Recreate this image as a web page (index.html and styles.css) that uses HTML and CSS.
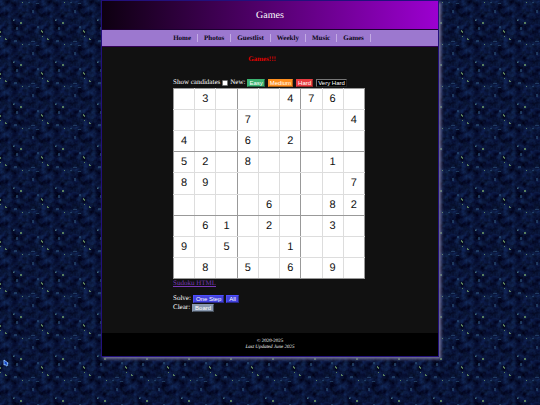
FILE: index.html
```
<!DOCTYPE html>
<html lang="en">
<head>
    <meta charset="UTF-8">
    <meta name="viewport" content="width=device-width, initial-scale=1.0">
    <title>Games</title>
    <link rel="stylesheet" href="styles.css">
</head>
<body>
    <div class="page">
        <header class="header">
            <h1>Games</h1>
        </header>
        <nav class="nav">
            <a href="#home">Home</a>
            <a href="#photos">Photos</a>
            <a href="#guestlist">Guestlist</a>
            <a href="#weekly">Weekly</a>
            <a href="#music">Music</a>
            <a href="#games">Games</a>
        </nav>
        <main class="main">
            <h2>Games!!!</h2>
            <div class="sudoku">
                <div class="controls">
                    <label for="candidates">Show candidates</label>
                    <input type="checkbox" id="candidates">
                    <span class="new">New:</span>
                    <button class="btn easy">Easy</button>
                    <button class="btn medium">Medium</button>
                    <button class="btn hard">Hard</button>
                    <button class="btn veryhard">Very Hard</button>
                </div>
                <table class="board" id="board">
                    <tbody>
                        <tr><td></td><td>3</td><td></td><td></td><td></td><td>4</td><td>7</td><td>6</td><td></td></tr>
                        <tr><td></td><td></td><td></td><td>7</td><td></td><td></td><td></td><td></td><td>4</td></tr>
                        <tr><td>4</td><td></td><td></td><td>6</td><td></td><td>2</td><td></td><td></td><td></td></tr>
                        <tr><td>5</td><td>2</td><td></td><td>8</td><td></td><td></td><td></td><td>1</td><td></td></tr>
                        <tr><td>8</td><td>9</td><td></td><td></td><td></td><td></td><td></td><td></td><td>7</td></tr>
                        <tr><td></td><td></td><td></td><td></td><td>6</td><td></td><td></td><td>8</td><td>2</td></tr>
                        <tr><td></td><td>6</td><td>1</td><td></td><td>2</td><td></td><td></td><td>3</td><td></td></tr>
                        <tr><td>9</td><td></td><td>5</td><td></td><td></td><td>1</td><td></td><td></td><td></td></tr>
                        <tr><td></td><td>8</td><td></td><td>5</td><td></td><td>6</td><td></td><td>9</td><td></td></tr>
                    </tbody>
                </table>
                <a class="source" href="#sudoku">Sudoku HTML</a>
                <div class="actions">
                    <span>Solve:</span>
                    <button class="btn solve">One Step</button>
                    <button class="btn solve">All</button>
                </div>
                <div class="actions">
                    <span>Clear:</span>
                    <button class="btn clear">Board</button>
                </div>
            </div>
        </main>
        <footer class="footer">
            <p>&copy; 2020-2025</p>
            <p><i>Last Updated June 2025</i></p>
        </footer>
    </div>

    <svg class="pointer" viewBox="0 0 6 8" aria-hidden="true">
        <path d="M1 1 L1 6 L2.3 5.4 L3.3 7 L4.6 6.4 L4 4.8 L5.2 4.2 Z" fill="#0b3cc4" stroke="#8fc4ff" stroke-width=".9"/>
    </svg>
</body>
</html>
```
FILE: styles.css
```
* {
    box-sizing: border-box;
}

body {
    margin: 0;
    min-height: 100vh;
    font-family: "Liberation Serif", "Times New Roman", serif;
    font-size: 7px;
    line-height: 9px;
    text-rendering: geometricPrecision;
    color: #fff;
    background-color: #050f30;
    /* speckled blue rock tile */
    background-image: url("data:image/svg+xml,%3Csvg xmlns='http://www.w3.org/2000/svg' width='42' height='42'%3E%3Cfilter id='r' x='0' y='0' width='100%25' height='100%25' color-interpolation-filters='sRGB'%3E%3CfeTurbulence type='fractalNoise' baseFrequency='.17' numOctaves='3' seed='11' stitchTiles='stitch'/%3E%3CfeColorMatrix values='.1 .05 0 0 -.04 .22 .12 0 0 -.09 .38 .12 0 0 -.03 0 0 0 0 1'/%3E%3C/filter%3E%3Crect width='42' height='42' filter='url(%23r)'/%3E%3Cg fill='%23729f68' opacity='.75'%3E%3Cpath d='M20 22h2v2h-2zM5 39h2v1h-2zM0 31h1v2h-1zM0 36h1v1h-1zM5 38h1v2h-1zM41 30h1v2h-1zM13 20h1v1h-1zM22 2h1v1h-1z'/%3E%3C/g%3E%3Cg fill='%23355f85' opacity='.5'%3E%3Cpath d='M32 10h2v3h-2zM13 19h2v2h-2zM28 2h2v1h-2zM36 3h3v1h-3zM16 27h2v3h-2zM37 26h2v2h-2zM14 42h3v-2h-3zM31 41h4v1h-4z'/%3E%3C/g%3E%3C/svg%3E");
}

h1, h2, p {
    margin: 0;
}

.page {
    margin: 0 101px;
    border: 1px solid #22107c;
    box-shadow: 2px 2px 3px #77759c;
}

.header {
    padding: 9px 0 7px;
    border-bottom: 1px solid #1c0030;
    background: linear-gradient(to right, #0d0010, #9c00d0);
    text-align: center;
}

.header h1 {
    font-size: 10px;
    font-weight: normal;
    line-height: 12px;
}

.nav {
    display: flex;
    justify-content: center;
    padding: 4px 2px 4px 0;
    border-bottom: 1px solid #320055;
    background: #9c78cf;
}

.nav a {
    padding: 0 6px;
    border-right: 1px solid #c3abe4;
    color: #0b0614;
    font-weight: bold;
    line-height: 8px;
    text-decoration: none;
}

.main {
    padding: 8px 2px 21px 0;
    background: #111;
}

.main h2 {
    margin-bottom: 13px;
    padding-right: 14px;
    color: #e00000;
    font-size: 7px;
    text-align: center;
}

.sudoku {
    width: 192px;
    margin: 0 auto;
}

.controls, .actions {
    display: flex;
    align-items: center;
    gap: 2px;
    white-space: nowrap;
}

.controls {
    height: 11px;
}

.controls input {
    width: 6px;
    height: 6px;
    margin: 0;
    appearance: none;
    border: 1px solid #767676;
    border-radius: 1px;
    background: #fff;
}

.btn {
    height: 8px;
    padding: 0 2px;
    border: 1px outset #777;
    font-family: "Liberation Sans", Arial, sans-serif;
    font-size: 6px;
    line-height: 6px;
    color: #fff;
}

.controls .btn {
    padding: 0 1px;
}

.controls .btn + .btn {
    margin-left: 1px;
}

.easy {
    background: #3cb371;
    border-color: #3cb371;
}

.medium {
    background: #ff9020;
    border-color: #ff9020;
}

.hard {
    background: #e83c40;
    border-color: #e83c40;
}

.veryhard {
    background: #000;
}

.solve {
    background: #4343dd;
    border-color: #4343dd;
}

.clear {
    background: #8797ae;
    border-color: #8797ae;
}

.board {
    width: 100%;
    height: 191px;
    table-layout: fixed;
    border-collapse: collapse;
    border: 1px solid #999;
    background: #fff;
    color: #111;
    font-family: "Liberation Sans", Arial, sans-serif;
    font-size: 11px;
    line-height: 20px;
}

.board td {
    height: 21px;
    padding: 0;
    border: 1px solid #ddd;
    text-align: center;
}

.board td:nth-child(3n) {
    border-right-color: #999;
}

.board tr:nth-child(3n) td {
    border-bottom-color: #999;
}

.board tr:first-child td {
    border-top-color: #999;
}

.board td:first-child {
    border-left-color: #999;
}

.source {
    display: block;
    width: max-content;
    margin-bottom: 6px;
    color: #7a38b8;
}

.footer {
    padding: 6px 0 5px;
    background: #000;
    font-size: 5px;
    line-height: 6px;
    text-align: center;
}

/* lies over the page background */
.pointer {
    position: absolute;
    left: 3px;
    top: 359px;
    width: 6px;
    height: 8px;
}
```
